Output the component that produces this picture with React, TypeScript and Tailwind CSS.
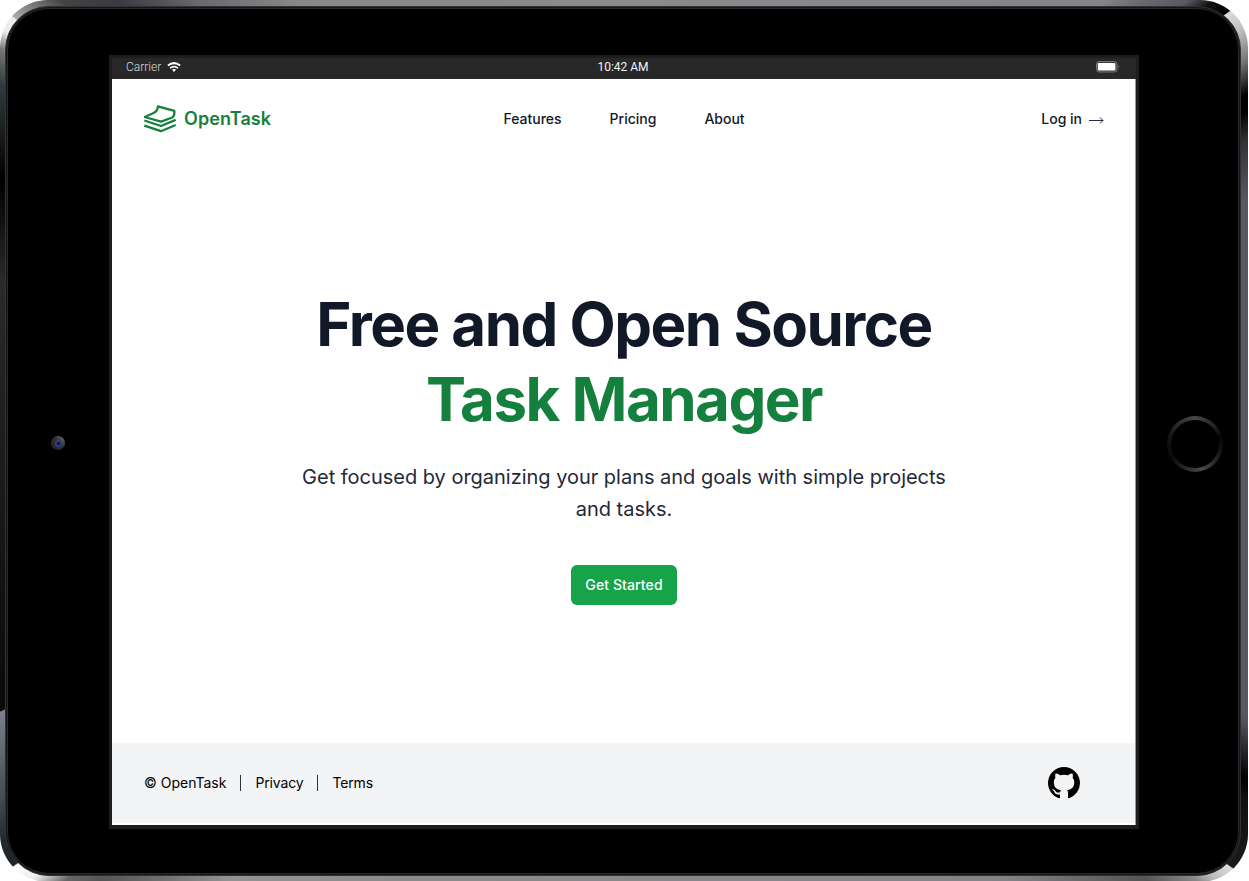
import React from "react";

const navItems = ["Features", "Pricing", "About"];

function Logo() {
  return (
    <svg width="32" height="28" viewBox="0 0 32 28" fill="none" stroke="#15803d" strokeWidth="2.3" strokeLinejoin="round">
      <path d="M0.5 12 L7.5 9 Q14 6.8 13.9 1.4 L30.3 5.9 Q30.8 10.8 28.3 12.5 L17 16.6 Z" />
      <path d="M0.3 15.5 L17 21 L31.7 14.8" />
      <path d="M0.3 15.5 L17 21 L31.7 14.8" transform="translate(0 5.2)" />
    </svg>
  );
}

function WifiIcon() {
  return (
    <svg width="14" height="10" viewBox="0 0 14 10" fill="none" stroke="#fff" strokeWidth="2">
      <path d="M0.9 3.6 Q7 -1.4 13.1 3.6" />
      <path d="M3.1 6.1 Q7 3 10.9 6.1" strokeWidth="1.7" />
      <path d="M4.9 7.6 Q7 6.2 9.1 7.6 L7 9.9 Z" fill="#fff" stroke="none" />
    </svg>
  );
}

function BatteryIcon() {
  return (
    <svg width="24" height="12" viewBox="0 0 24 12">
      <rect x="0.5" y="0.5" width="20.5" height="10.5" rx="2.5" fill="#3a3a3a" stroke="#777" />
      <rect x="1.8" y="2" width="17.6" height="7.6" rx="1" fill="#fff" />
      <path d="M21.6 3.8 L24 5.8 L21.6 7.8 Z" fill="#555" />
    </svg>
  );
}

function GitHubIcon() {
  return (
    <svg width="32" height="32" viewBox="0 0 16 16" fill="#000">
      <path d="M8 0C3.58 0 0 3.58 0 8c0 3.54 2.29 6.53 5.47 7.59.4.07.55-.17.55-.38 0-.19-.01-.82-.01-1.49-2.01.37-2.53-.49-2.69-.94-.09-.23-.48-.94-.82-1.13-.28-.15-.68-.52-.01-.53.63-.01 1.08.58 1.23.82.72 1.21 1.87.87 2.33.66.07-.52.28-.87.51-1.07-1.78-.2-3.64-.89-3.64-3.95 0-.87.31-1.59.82-2.15-.08-.2-.36-1.02.08-2.12 0 0 .67-.21 2.2.82.64-.18 1.32-.27 2-.27s1.36.09 2 .27c1.53-1.04 2.2-.82 2.2-.82.44 1.1.16 1.92.08 2.12.51.56.82 1.27.82 2.15 0 3.07-1.87 3.75-3.65 3.95.29.25.54.73.54 1.48 0 1.07-.01 1.93-.01 2.2 0 .21.15.46.55.38A8.01 8.01 0 0 0 16 8c0-4.42-3.58-8-8-8z" />
    </svg>
  );
}

function StatusBar() {
  return (
    <div className="grid h-[21px] shrink-0 grid-cols-3 items-center bg-[#282828] pl-[14px] pr-4 text-xs text-[#f3f3f3] [font-family:Roboto,sans-serif]">
      <div className="flex items-center gap-[6px] font-light text-[#d8d8d8]">
        <span className="pb-[3px]">Carrier</span>
        <span className="pb-[3px]"><WifiIcon /></span>
      </div>
      <span className="pb-[3px] text-center">10:42 AM</span>
      <span className="flex justify-end pb-[3px]"><BatteryIcon /></span>
    </div>
  );
}

function Header() {
  return (
    <header className="flex h-20 shrink-0 items-center justify-between px-8 text-sm font-[450] text-[#111827]">
      <a className="flex flex-1 items-center gap-2">
        <Logo />
        <span className="text-lg font-semibold leading-7 tracking-[0.08px] text-[#15803d]">OpenTask</span>
      </a>
      <nav className="flex gap-12">
        {navItems.map((item) => (
          <a key={item}>{item}</a>
        ))}
      </nav>
      <a className="flex flex-1 items-center justify-end gap-[7px]">
        Log in
        <svg className="mt-px" width="15" height="10" viewBox="0 0 15 10" fill="none" stroke="#111827" strokeWidth="0.9">
          <path d="M0 5.5 H14 M11 2.5 L14 5.5 L11 8.5" />
        </svg>
      </a>
    </header>
  );
}

function Hero() {
  return (
    <main className="flex flex-1 flex-col items-center pt-[128px] text-center">
      <h1 className="text-6xl font-bold leading-[75px] tracking-tight text-[#111827]">
        Free and Open Source
        <span className="block text-[#15803d]">Task Manager</span>
      </h1>
      <p className="mt-6 w-[672px] text-xl leading-8 tracking-[-0.02px] text-[#1f2937]">
        Get focused by organizing your plans and goals with simple projects and tasks.
      </p>
      <button className="mt-10 h-10 w-[106px] rounded-md bg-[#16a34a] text-sm font-medium tracking-[0.1px] text-white">
        Get Started
      </button>
    </main>
  );
}

function Footer() {
  return (
    <footer className="mb-[2px] flex h-20 shrink-0 items-center justify-between bg-[#f3f4f6] pl-8 pr-14 text-sm text-black shadow-[inset_-1px_0_#999]">
      <div className="flex items-center">
        <span>© OpenTask</span>
        <span className="mx-[14px] h-4 w-px bg-[#333]" />
        <a className="tracking-[-0.15px]">Privacy</a>
        <span className="mx-[14px] h-4 w-px bg-[#333]" />
        <a className="tracking-[-0.15px]">Terms</a>
      </div>
      <GitHubIcon />
    </footer>
  );
}

function Camera() {
  return (
    <div className="flex w-[101px] shrink-0 justify-center pr-[1px] pt-[427px]">
      <div className="flex size-[14px] items-center justify-center rounded-full bg-[linear-gradient(225deg,#777,#303030_45%,#222)]">
        <div className="size-[7px] rounded-full bg-[radial-gradient(circle,#0c1740_15%,#2a489c_60%,#26324f)]" />
      </div>
    </div>
  );
}

function HomeButton() {
  return (
    <div className="flex flex-1 pl-7 pt-[407px]">
      <div className="size-14 rounded-full bg-[conic-gradient(#48474c,#232226_45deg,#050505_75deg,#151517_110deg,#48474c_165deg,#333236_190deg,#080808_240deg,#161618_290deg,#48474c)] p-1">
        <div className="size-full rounded-full bg-black" />
      </div>
    </div>
  );
}

export default function App() {
  return (
    <div className="h-[881px] w-[1249px] overflow-hidden bg-white antialiased [font-family:Inter,sans-serif]">
      <div className="h-[882px] w-[1248px] rounded-[48px] bg-[conic-gradient(#8b8b8b_0deg,#858489_47.4deg,#6a696d_49.7deg,#5a5960_52deg,#111_53.3deg,#000_54.6deg,#ddd_54.7deg,#bbb_56.5deg,#777_58.5deg,#000_60.9deg,#000_62deg,#333_64.2deg,#5b575f_68.8deg,#5b575f_114deg,#000_118.5deg,#111_120deg,#1a1a1c_125deg,#ddd_125.1deg,#bbb_126.5deg,#888_127.5deg,#555_130deg,#848387_139deg,#8a8a8a_207deg,#929292_222deg,#555_230deg,#666_231.8deg,#eee_233.5deg,#fff_235.1deg,#202426_235.2deg,#22282c_237.2deg,#444a50_240deg,#7b808c_246.5deg,#0a0a0a_246.6deg,#111_255.5deg,#2a2a28_284.5deg,#000_293deg,#333a3c_299.8deg,#777_302.2deg,#eee_303.5deg,#eee_304.7deg,#aaa_304.8deg,#666_307deg,#444_308deg,#3a3a40_311deg,#6b6b6e_316deg,#888_323.5deg,#8b8b8b_360deg)] pb-[6px] pl-[5px] pr-[7px] pt-[6px]">
        <div className="size-full rounded-[44px] border border-[#303137] bg-[#15151a] p-px">
          <div className="flex size-full rounded-[42px] border border-[#27282e] bg-black">
            <Camera />
            <div className="mt-[46px] flex h-[774px] w-[1030px] shrink-0 flex-col border-[3px] border-b-4 border-[#1d1d1d] bg-[#1d1d1d]">
              <StatusBar />
              <div className="flex min-h-0 flex-1 flex-col bg-white shadow-[inset_-1px_0_#999]">
                <Header />
                <Hero />
                <Footer />
              </div>
            </div>
            <HomeButton />
          </div>
        </div>
      </div>
    </div>
  );
}
